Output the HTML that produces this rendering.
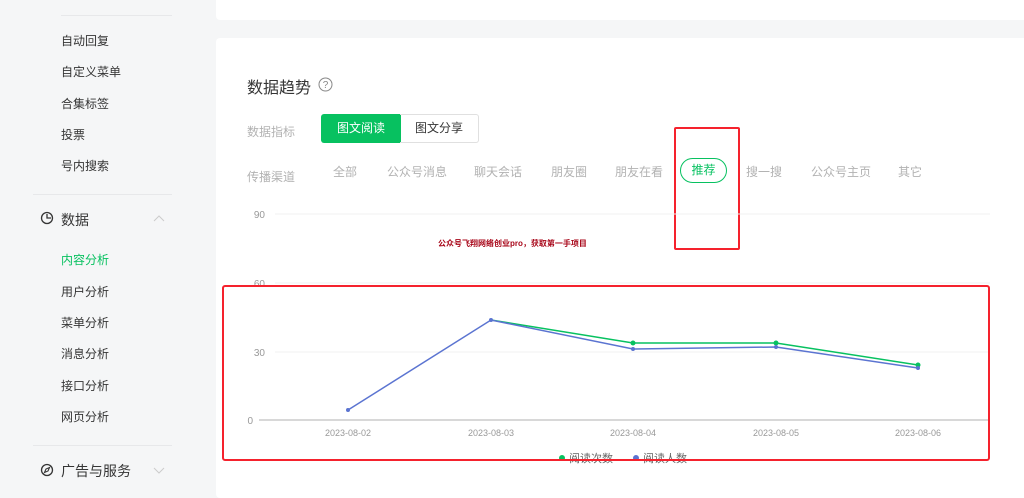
<!DOCTYPE html>
<html><head><meta charset="utf-8"><style>
*{margin:0;padding:0;box-sizing:border-box}
body{width:1024px;height:491px;overflow:hidden;background:#f5f6f7;font-family:"Liberation Sans","Noto Sans CJK SC",sans-serif;position:relative}
.abs{position:absolute;white-space:nowrap}
.side{font-size:12px;color:#353535}
.hr{position:absolute;height:1px;background:#e7e8ea}
.card{position:absolute;background:#fff;border-radius:4px}
.ch{font-size:12px;color:#b2b2b2}
</style></head><body>
<div class="hr" style="left:61px;top:15px;width:111px"></div>
<div class="abs side" style="left:61px;top:32px">自动回复</div>
<div class="abs side" style="left:61px;top:63px">自定义菜单</div>
<div class="abs side" style="left:61px;top:95px">合集标签</div>
<div class="abs side" style="left:61px;top:126px">投票</div>
<div class="abs side" style="left:61px;top:157px">号内搜索</div>
<div class="hr" style="left:33px;top:194px;width:139px"></div>
<svg class="abs" style="left:40px;top:211px" width="14" height="14" viewBox="0 0 14 14"><circle cx="7" cy="7" r="5.5" fill="none" stroke="#353535" stroke-width="1.3"/><path d="M7 3v4h4" fill="none" stroke="#353535" stroke-width="1.3"/></svg>
<div class="abs" style="left:61px;top:210px;font-size:14px;color:#353535">数据</div>
<svg class="abs" style="left:153px;top:214px" width="12" height="8"><path d="M1 7l5-5 5 5" fill="none" stroke="#ccc" stroke-width="1"/></svg>
<div class="abs side" style="left:61px;top:251px;color:#07c160">内容分析</div>
<div class="abs side" style="left:61px;top:283px">用户分析</div>
<div class="abs side" style="left:61px;top:314px">菜单分析</div>
<div class="abs side" style="left:61px;top:345px">消息分析</div>
<div class="abs side" style="left:61px;top:377px">接口分析</div>
<div class="abs side" style="left:61px;top:408px">网页分析</div>
<div class="hr" style="left:33px;top:445px;width:139px"></div>
<svg class="abs" style="left:40px;top:463px" width="14" height="14" viewBox="0 0 14 14"><circle cx="7" cy="7" r="5.5" fill="none" stroke="#353535" stroke-width="1.3"/><path d="M9.5 4.5L8 8 4.5 9.5 6 6z" fill="none" stroke="#353535" stroke-width="1.1"/></svg>
<div class="abs" style="left:61px;top:461px;font-size:14px;color:#353535">广告与服务</div>
<svg class="abs" style="left:153px;top:467px" width="12" height="8"><path d="M1 1l5 5 5-5" fill="none" stroke="#ccc" stroke-width="1"/></svg>

<div class="card" style="left:216px;top:-4px;width:820px;height:24px"></div>
<div class="card" style="left:216px;top:38px;width:820px;height:460px"></div>
<div class="abs" style="left:247px;top:74px;font-size:16px;color:#353535">数据趋势</div>
<svg class="abs" style="left:318px;top:77px" width="15" height="15" viewBox="0 0 15 15"><circle cx="7.5" cy="7.5" r="6.5" fill="none" stroke="#888" stroke-width="1"/><text x="7.5" y="11" font-size="10" text-anchor="middle" fill="#888" font-family="Liberation Sans">?</text></svg>
<div class="abs ch" style="left:247px;top:123px">数据指标</div>
<div class="abs" style="left:321px;top:114px;width:80px;height:29px;background:#07c160;border-radius:3px 0 0 3px;color:#fff;font-size:12px;text-align:center;line-height:29px">图文阅读</div>
<div class="abs" style="left:400px;top:114px;width:79px;height:29px;border:1px solid #e0e0e0;border-left:none;border-radius:0 3px 3px 0;color:#353535;font-size:12px;text-align:center;line-height:27px">图文分享</div>
<div class="abs ch" style="left:247px;top:168px">传播渠道</div>
<div class="abs ch" style="left:333px;top:163px">全部</div>
<div class="abs ch" style="left:387px;top:163px">公众号消息</div>
<div class="abs ch" style="left:474px;top:163px">聊天会话</div>
<div class="abs ch" style="left:551px;top:163px">朋友圈</div>
<div class="abs ch" style="left:615px;top:163px">朋友在看</div>
<div class="abs" style="left:680px;top:158px;width:47px;height:25px;border:1px solid #07c160;border-radius:13px;color:#07c160;font-size:12px;text-align:center;line-height:23px">推荐</div>
<div class="abs ch" style="left:746px;top:163px">搜一搜</div>
<div class="abs ch" style="left:811px;top:163px">公众号主页</div>
<div class="abs ch" style="left:898px;top:163px">其它</div>
<div class="abs" style="left:674px;top:127px;width:66px;height:123px;border:2px solid #f5222d;border-radius:2px"></div>
<div class="abs" style="left:438px;top:238px;font-size:8px;color:#a8071a;font-weight:bold">公众号飞翔网络创业pro，获取第一手项目</div>

<svg class="abs" style="left:0;top:0" width="1024" height="491">
<g font-family="Liberation Sans" font-size="10" fill="#999" text-anchor="end">
<text x="265" y="218">90</text><text x="265" y="287">60</text><text x="265" y="356">30</text><text x="253" y="424">0</text></g>
<g stroke="#f0f0f0"><line x1="275" y1="214" x2="990" y2="214"/><line x1="275" y1="283" x2="990" y2="283"/><line x1="275" y1="352" x2="990" y2="352"/></g>
<line x1="259" y1="420" x2="990" y2="420" stroke="#ccc" stroke-width="1.5"/>
<g font-family="Liberation Sans" font-size="9" fill="#999" text-anchor="middle">
<text x="348" y="436">2023-08-02</text><text x="491" y="436">2023-08-03</text><text x="633" y="436">2023-08-04</text><text x="776" y="436">2023-08-05</text><text x="918" y="436">2023-08-06</text></g>
<polyline points="491,320 633,343 776,343 918,365" fill="none" stroke="#07c160" stroke-width="1.5"/>
<g fill="#07c160"><circle cx="633" cy="343" r="2.5"/><circle cx="776" cy="343" r="2.5"/><circle cx="918" cy="365" r="2.5"/></g>
<polyline points="348,410 491,320 633,349 776,347 918,368" fill="none" stroke="#5b74d1" stroke-width="1.5"/>
<g fill="#5b74d1"><circle cx="348" cy="410" r="2"/><circle cx="491" cy="320" r="2"/><circle cx="633" cy="349" r="2"/><circle cx="776" cy="347" r="2"/><circle cx="918" cy="368" r="2"/></g>
<circle cx="562" cy="458" r="3" fill="#07c160"/><circle cx="636" cy="458" r="3" fill="#5b74d1"/>
<g font-family="Liberation Sans,Noto Sans CJK SC" font-size="11" fill="#666"><text x="569" y="462">阅读次数</text><text x="643" y="462">阅读人数</text></g>
<rect x="223" y="286" width="766" height="174" fill="none" stroke="#f5222d" stroke-width="2" rx="2"/>
</svg>
</body></html>
